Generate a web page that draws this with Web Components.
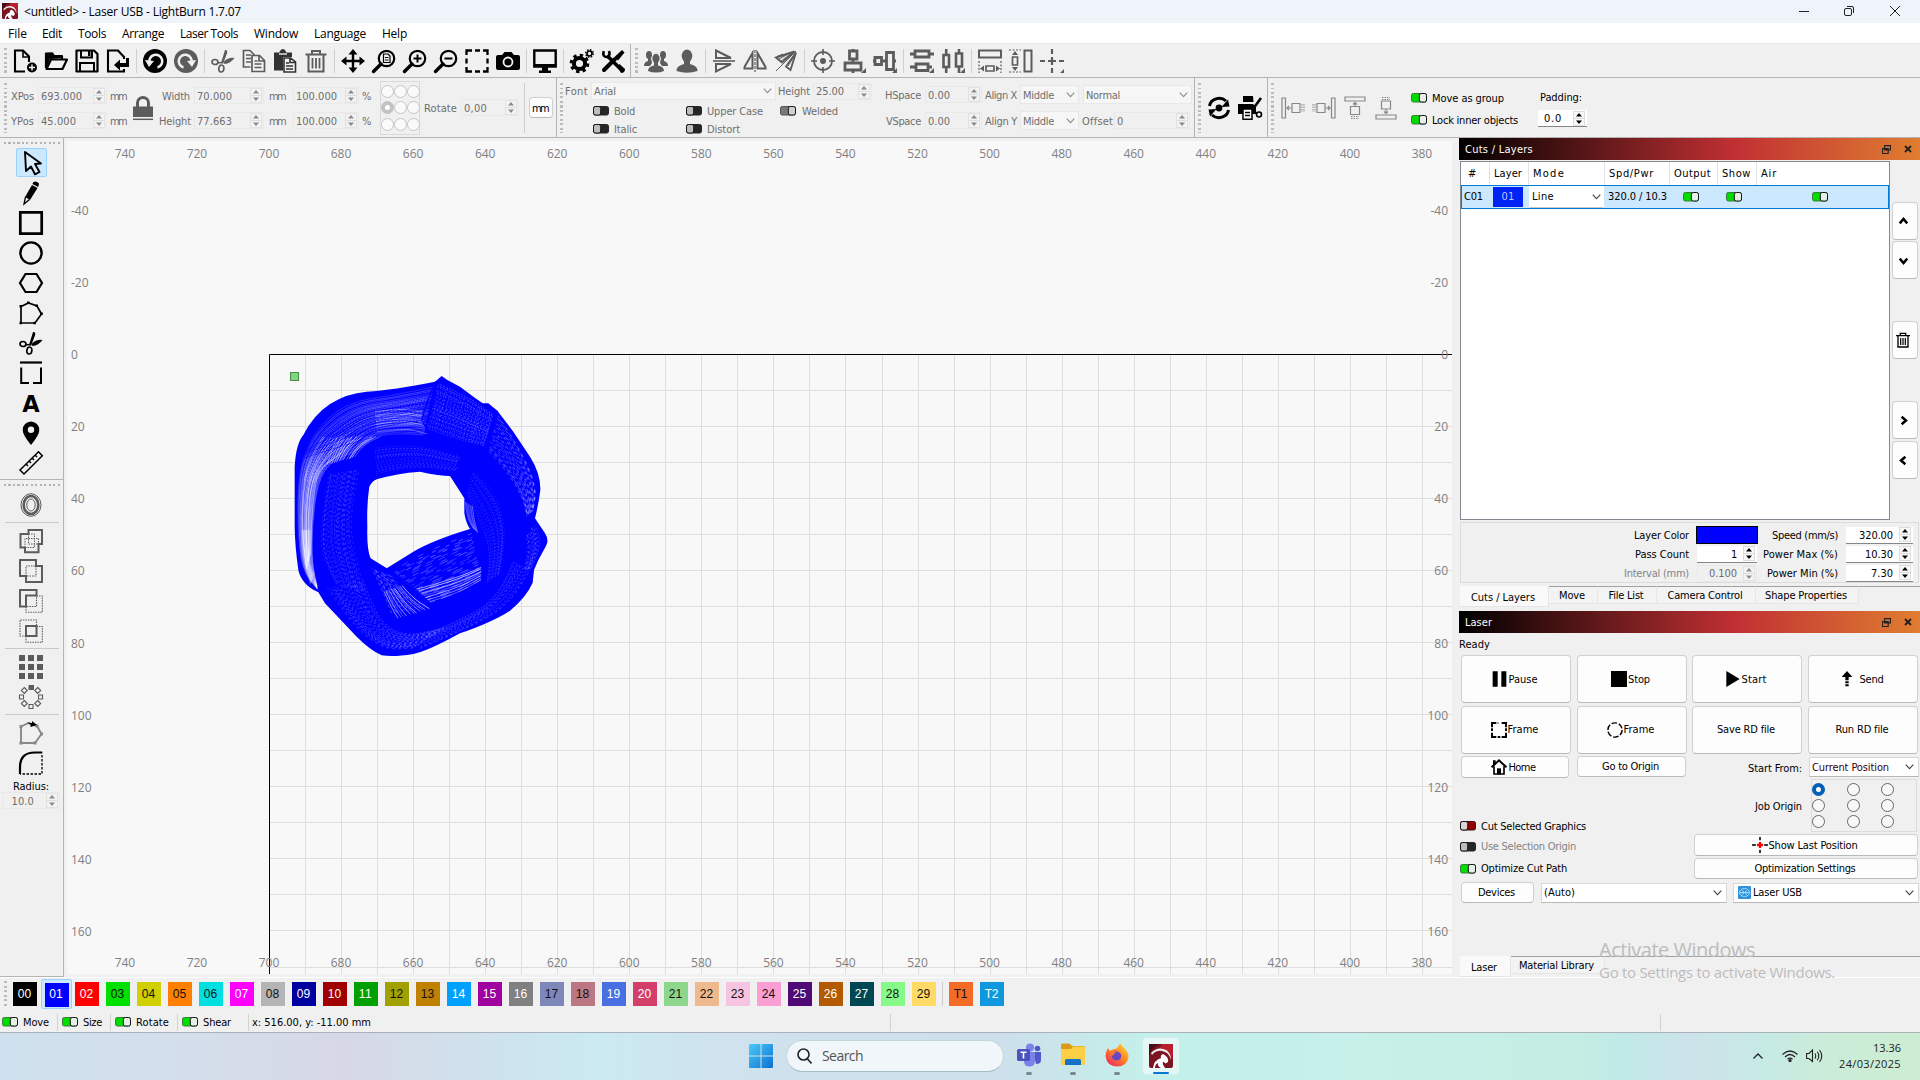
<!DOCTYPE html>
<html lang="en">
<head>
<meta charset="utf-8">
<title>LightBurn</title>
<style>
html,body{margin:0;height:100%;overflow:hidden;background:#f0f0f0}
body{font:11px "DejaVu Sans Condensed","DejaVu Sans",sans-serif;color:#000}
</style>
</head>
<body>
<lb-app></lb-app>
<script>
/* ---------- layout helpers: consecutive flex items described by start and size ---------- */
const H = (x0, items, st = '') => {
  let p = x0, s = `<div style="display:flex;align-items:center;height:100%;${st}">`;
  for (const [x, w, h, e] of items) { s += `<div style="flex:none;display:flex;align-items:center;margin-left:${x - p}px;width:${w}px;${e || ''}">${h}</div>`; p = x + w; }
  return s + '</div>';
};
const V = (y0, items, st = '') => {
  let p = y0, s = `<div style="display:flex;flex-direction:column;height:100%;width:100%;align-self:flex-start;${st}">`;
  for (const [y, h, c, e] of items) { s += `<div style="flex:none;margin-top:${y - p}px;height:${h}px;${e || ''}">${c}</div>`; p = y + h; }
  return s + '</div>';
};
const T = (t, w, c) => `<lb-text ${w ? `w="${w}"` : ''} ${c ? `style="color:${c}"` : ''}>${t}</lb-text>`;
const G = '#6e6e6e';
const I = (n, s = 24, c) => `<lb-icon name="${n}" size="${s}" ${c ? `style="color:${c}"` : ''}></lb-icon>`;
const TG = k => `<lb-toggle kind="${k}"></lb-toggle>`;
const define = (name, css, render, after) => customElements.define(name, class extends HTMLElement {
  connectedCallback() {
    if (this.shadowRoot) return;
    const r = this.attachShadow({ mode: 'open' });
    r.innerHTML = `<style>${css}</style>` + render(this);
    if (after) after(this, r);
  }
});
const A = (e, n, d = '') => e.getAttribute(n) ?? d;

/* ---------- icons, 24x24 ---------- */
const S = (d, w = 2, x = '') => `<path d="${d}" fill="none" stroke="currentColor" stroke-width="${w}" ${x}/>`;
const F = (d, x = '') => `<path d="${d}" fill="currentColor" ${x}/>`;
const scis = F('M14 1q4-1 1 6l-3 8-2-1z') + F('M23.500 9q-6-1-11 4l1 2q6-.5 10-6z') + S('M4 10.500c4 0 4 5 0 5s-4-5 0-5zM10.500 16c3.500 0 3 7-.5 7s-2.500-7 .5-7zM6 14l5-.5', 1.7);
const mag = S('M14.500 1.800a7.700 7.700 0 1 1 0 15.400a7.700 7.700 0 1 1 0-15.400', 2.2) + S('M9 15L1.500 22.500', 3.4, 'stroke-linecap="round"');
const ICONS = {
  newf: S('M12 22.500H2V1.500H10L16 7.500V13', 2.1) + S('M10 1.500V8H16', 1.6) + '<circle cx="19" cy="18.500" r="5" fill="currentColor"/><path d="M19 15.500v6M16 18.500h6" stroke="#f0f0f0" stroke-width="1.500"/>',
  open: S('M2 19V4.500H8L10 7H18V10', 2.2, 'stroke-linejoin="round"') + S('M2.500 20L7 10.500H23L18.500 20Z', 2.2, 'stroke-linejoin="round"') + F('M1 4L9 3.500L10 7H19V9L6 10L2 20Z'),
  save: S('M1.500 1.500H19L22.500 5V22.500H1.500Z', 2.2, 'stroke-linejoin="round"') + S('M6 1.500V8.500H17V1.500M5 22V14H19V22', 2) + F('M13 2h2.500v5H13z'),
  exp: S('M18 10V8L12 1.500H2V22.500H18V20', 2.1) + F('M8 16L14 10.500V14H20V9H23V18H14V21.500Z'),
  undo: '<circle cx="12" cy="12" r="12" fill="currentColor"/><path d="M6.500 14A6.500 6.500 0 1 1 14.500 18.500" fill="none" stroke="#f0f0f0" stroke-width="2.600"/><path d="M2 11L11 12L6 18Z" fill="#f0f0f0"/>',
  redo: '<circle cx="12" cy="12" r="12" fill="currentColor"/><path d="M17.500 14A6.500 6.500 0 1 0 9.500 18.500" fill="none" stroke="#f0f0f0" stroke-width="2.600"/><path d="M22 11L13 12L18 18Z" fill="#f0f0f0"/>',
  cut: scis,
  copy: S('M8.500 18H1.500V1.500H8L12.500 6M4 6h5M4 9.500h5M4 13h5', 1.7) + S('M10 6.500H17.500L22.500 11.500V22.500H10ZM17 7V12H22M12.500 12h3M12.500 15h7M12.500 18.500h7', 1.7),
  paste: F('M1 3.500H6.500Q6.500 1 10 0Q13 1 13 3.500H19V8H10V21.500H1Z') + '<path d="M6 5h8" stroke="#f0f0f0" stroke-width="1.400"/>' + S('M11 9H17.500L22.500 13V23H11ZM17 9V13.500H22M13 14h3M13 17h7M13 20h7', 1.6),
  trash: S('M4.500 6V22.500H19.500V6M1.500 5.500H22.500M8 5V2H16V5', 2) + S('M8.500 9v10.500M12 9v10.500M15.500 9v10.500', 1.8),
  move: S('M12 3V21M3 12H21', 2.4) + F('M12 0l4.500 5.500h-9zM12 24l4.500-5.500h-9zM0 12l5.500-4.500v9zM24 12l-5.500-4.500v9z'),
  zfit: mag + S('M11.500 5H16L18 7V13.500H11.500ZM13 8.500h3.500M13 11h3.500', 1.2),
  zin: mag + S('M14.500 5.500v8M10.500 9.500h8', 2), zout: mag + S('M10.500 9.500h8', 2),
  marq: S('M1.500 6V1.500H7M10 1.500H15M18 1.500H22.500V6M22.500 9.500V14.500M22.500 18V22.500H18M15 22.500H10M7 22.500H1.500V18M1.500 14.500V9.500', 2.3),
  cam: F('M2 6H6L8.500 3H15.500L18 6H22Q24 6 24 8V19Q24 21 22 21H2Q0 21 0 19V8Q0 6 2 6Z') + '<circle cx="12" cy="13" r="4.500" fill="none" stroke="#f0f0f0" stroke-width="1.800"/>',
  mon: S('M1.300 1.500H22.700V17.500H1.300Z', 2.4) + F('M1 15H23V18H1zM9 18H15V21.500H18V24H6V21.500H9Z'),
  gear: '<circle cx="9.500" cy="14.500" r="5.600" fill="none" stroke="currentColor" stroke-width="4"/><circle cx="9.500" cy="14.500" r="8.300" fill="none" stroke="currentColor" stroke-width="3" stroke-dasharray="3.300 3.219"/><circle cx="19.500" cy="4.500" r="2.500" fill="none" stroke="currentColor" stroke-width="1.700"/><circle cx="19.500" cy="4.500" r="3.800" fill="none" stroke="currentColor" stroke-width="1.400" stroke-dasharray="1.500 1.484"/>',
  tools: S('M6 6.500L19.500 20', 3.6) + S('M3 21L14 10', 4, 'stroke-linecap="round"') + S('M2.800 2.200Q.8 8 6.500 8.200Q9.500 6 8 2', 2.600) + F('M13.500 8L21 1L23.500 3.500L17 11.500Z') + F('M16 17.500l2.500-2.500l5.500 5q0 4-4 4z'),
  group: '<ellipse cx="5" cy="6" rx="3" ry="4" fill="currentColor"/><ellipse cx="19" cy="6" rx="3" ry="4" fill="currentColor"/>' + F('M0 17Q0 13 4 12V9H7L8 14L6 17ZM24 17Q24 13 20 12V9H17L16 14L18 17Z') + '<ellipse cx="12" cy="9.500" rx="4" ry="5" fill="currentColor" stroke="#f0f0f0" stroke-width=".8"/>' + F('M4 22Q4 17.500 10 16.500V13H14V16.500Q20 17.500 20 22Q12 25 4 22Z'),
  person: '<ellipse cx="12" cy="7" rx="5.300" ry="6.500" fill="currentColor"/>' + F('M1.500 22Q1 17 9 15V12H15V15Q23 17 22.500 22Q12 25.500 1.500 22Z'),
  flipv: S('M4 1.500L19 9H4ZM4 22.500V15H19Z', 2) + S('M1 12H23', 1.6),
  fliph: S('M1.500 19.500V18L9.500 4V19.500ZM22.500 19.500V18L14.500 4V19.500Z', 2) + S('M12 1V23', 1.2, 'stroke-dasharray="3 1"'),
  diag: S('M2 8.500L20.500 2.500L8 13.500ZM22 3.500L16.500 21L12 17.500Z', 1.900) + S('M2 22L22 2M5 10L16 4M7 12L18 4M3 7.500L9 5M14 17L21 6', 1),
  target: '<circle cx="12" cy="12" r="9" fill="none" stroke="currentColor" stroke-width="1.800"/><circle cx="12" cy="12" r="3" fill="currentColor"/>' + S('M12 0V6M12 18V24M0 12H6M18 12H24', 1.6),
  alh: S('M7.500 2H15V10H7.500ZM3 14H19V21H3ZM11 10v4M11 0v3M11 21v3', 2.800) + F('M24 19v5h-5z'),
  alv: S('M2 8.500H8.500V15.500H2ZM13.500 3.500H20.500V20.500H13.500ZM8.500 12h5M0 12h2M20 12h3', 2.800) + F('M24 19v5h-5z'),
  dish: S('M5 2H19V8H5ZM6 15H18V21.500H6ZM0 5H5M19 5H24M0 18H6M18 18H22', 2.800) + F('M24 19v5h-5z'),
  disv: S('M2.500 6H8V18H2.500ZM15 4.500H21V17.500H15ZM5.200 0V6M5.200 18V24M18 0V5M18 17V24', 2.600) + F('M24 19v5h-5z'),
  rezh: S('M1 1.500H23V8.500H1Z', 2) + S('M1 12V24M23 12V24', 1.2, 'stroke-dasharray="2 1.500"') + S('M8 17H16V22H8Z', 1.7) + F('M2 19.500l4-3v6zM22 19.500l-4-3v6z'),
  rezv: S('M15.500 1.500H22.500V22.500H15.500Z', 2) + S('M0 1H12M0 23H12', 1.2, 'stroke-dasharray="2 1.500"') + S('M3.500 8H8.500V16H3.500Z', 1.7) + F('M6 2l3 4H3zM6 22l3-4H3z'),
  plus: S('M12 0V5M12 8V16M12 19V24M0 12H5M8 12H16M19 12H24', 2.2) + F('M24 20v4h-4z'),
  lock: S('M6.500 11V7a5.500 5.500 0 0 1 11 0V11', 3) + F('M2 10.500H22V21H2Z') + S('M2 23.300H22', 1.5),
  sync: S('M2.500 10A9.700 8.800 0 0 1 19 5M21.500 14A9.700 8.800 0 0 1 5 19', 3) + F('M22.500 10.500l-8 .5L21 3.500zM1.500 13.500l8-.5L3 20.500z') + '<circle cx="12" cy="12" r="3.400" fill="currentColor"/>',
  print: F('M5 0H15L15.500 6H5ZM0 8H15L18 11V18H0Z') + S('M15 13L23 2', 2.600) + S('M14 12L19 18', 1.800) + '<circle cx="21" cy="18.500" r="2.500" fill="#f0f0f0" stroke="currentColor" stroke-width="1.600"/><path d="M5 13H14V23.200H5Z" fill="#fff" stroke="currentColor" stroke-width="1.500"/>' + S('M7 16.500h5M7 19.500h5', 1.300),
  dl: S('M1 2H4.500V22H1ZM11 7.500H19V16.500H11ZM11 12H6M8 10L6 12L8 14', 1.200) + S('M21 8v8M23 8v8', 1, 'stroke-dasharray="1.500 1"'),
  dr: S('M19.500 2H23V22H19.500ZM5 7.500H13V16.500H5ZM13 12H18M16 10L18 12L16 14', 1.200) + S('M3 8v8M1 8v8', 1, 'stroke-dasharray="1.500 1"'),
  du: S('M2 1H22V5H2ZM7.500 10.500H16.500V18.500H7.500ZM12 10V6M10 8.500L12 6.500L14 8.500', 1.200) + S('M8 20.500h8M8 22.500h8', 1, 'stroke-dasharray="1.500 1"'),
  dd: S('M2 19H22V23H2ZM7.500 5H16.500V13H7.500ZM12 13V18M10 15.500L12 17.500L14 15.500', 1.200) + S('M8 3.500h8M8 1.500h8', 1, 'stroke-dasharray="1.500 1"'),
  cursor: '<path d="M5 1L21 12.500L15 13L19.500 21L15 23.300L11 15.500L6 20Z" fill="#fff" fill-opacity=".3" stroke="#000" stroke-width="1.900" stroke-linejoin="round"/>',
  pencil: F('M14 1.500Q17-1 20 2.500Q20 4 19 6L13.500 3Z') + F('M13 4L18.500 7L11 19L6 16Z') + S('M6.500 16L5 23L10.500 18.500', 1.300),
  sq: S('M1.300 1.300H22.700V22.700H1.300Z', 2.7),
  circ: '<circle cx="12" cy="12" r="10.600" fill="none" stroke="currentColor" stroke-width="2.400"/>',
  hex: S('M6.500 3H17.500L23 12L17.500 21H6.500L1 12Z', 2.200),
  poly: S('M2 5.500L9.500 2L18 5L22.500 13L16 22H2Z', 1.700) + F('M.5 4h2.500v2.500h-2.500zM8 .5h2.500v2.500H8zM16.500 3.500h2.500v2.500h-2.500zM21.300 11.500h2.500v2.500h-2.500zM14.500 20.800h2.500v2.500h-2.500zM.5 20.800h2.500v2.500h-2.500z'),
  frame: S('M1 1.500H23', 2.200) + S('M2.200 6.500V22H10M14 22H22V6.500', 2),
  text: '<text x="12" y="20.500" text-anchor="middle" font-family="DejaVu Sans" font-weight="700" font-size="22.500" fill="currentColor">A</text>',
  pin: F('M12 0.500A8.300 8.300 0 0 1 20.300 9Q20.300 14 12 24Q3.700 14 3.700 9A8.300 8.300 0 0 1 12 .5ZM12 5.500a3.200 3.200 0 1 0 0 6.400a3.200 3.200 0 1 0 0-6.400Z', 'fill-rule="evenodd"'),
  ruler: S('M1 19L19.500 .8L23.300 4.800L5 23ZM7 13l2 2M10 10l2 2M13 7l2 2M16 4l2 2', 1.500),
  off: '<ellipse cx="12" cy="12" rx="10" ry="11.300" fill="none" stroke="currentColor" stroke-width="1"/><ellipse cx="12" cy="12" rx="7.300" ry="9" fill="none" stroke="currentColor" stroke-width="2.600"/><ellipse cx="12" cy="12" rx="4.200" ry="6" fill="none" stroke="currentColor" stroke-width="1"/>',
  weld: S('M9.500 5V1H23V15H19.500V23.300H6V18.500H1.500V5Z', 2) + S('M9.500 5V15H19.500M6 18.500V9.500H19.500V15M9.500 5H15.500V18.500H6', 1, 'stroke-dasharray="1.500 1"'),
  uni: S('M1 1H17V7H23V23H7V17H1Z', 2) + S('M7 17V7H17V17Z', 1.100, 'stroke-dasharray="1.500 1"'),
  sub: S('M1 1H17.500V6.500H7V17.500H1Z', 2) + S('M17.500 7H23.300V23.300H7V17.500H17.500Z', 1.100, 'stroke-dasharray="1.500 1"'),
  inter: S('M7 7H17.500V17H7Z', 2) + S('M7 17H1V1H17.500V7M17.500 7.500H23.300V23.300H7V17', 1.100, 'stroke-dasharray="1.500 1"'),
  grid: F('M0 0h6v6H0zM9 0h6v6H9zM18 0h6v6h-6zM0 9h6v6H0zM9 9h6v6H9zM18 9h6v6h-6zM0 18h6v6H0zM9 18h6v6H9zM18 18h6v6h-6z'),
  rad: F('M9.500 0h5.500v5H9.500z') + S('M10 19.500h4v4h-4zM.5 10h4v4h-4zM19.500 10h4v4h-4zM5.300 2.500l3 3l-3 3l-3-3zM18.700 2.500l3 3l-3 3l-3-3zM5.300 15.500l3 3l-3 3l-3-3zM18.700 15.500l3 3l-3 3l-3-3z', 1.100),
  start: S('M2 5.500L9.500 2L18 5L22.500 13L16 22H2Z', 1.900) + F('M.5 4h3v3h-3zM16.500 3.500h3v3h-3zM21 11.500h3v3h-3zM14.500 20.500h3v3h-3zM.5 20.500h3v3h-3z') + '<path d="M8 1.500L13 2V0L18 4L11.500 6V3.500Z" fill="#000"/>',
  fillet: S('M1 23V16Q1 1.500 16 1.500H23.300', 2.200) + S('M23 4V23H1', 1.300, 'stroke-dasharray="2.500 1.500"'),
  up: S('M6 15l6-7l6 7', 4), down: S('M6 9l6 7l6-7', 4), right: S('M9 6l7 6l-7 6', 4), left: S('M15 6l-7 6l7 6', 4),
  pause: F('M1 0.500h7.500v23H1zM14 .5h7.500v23H14z'), stop: F('M0 0h24v24H0z'), play: F('M2 0L22 12L2 24Z'),
  send: F('M12 0L20 9H14.500V14H9.500V9H4ZM9.500 15.500h5v3h-5zM9.500 20h5v3h-5z'),
  fr: S('M1.500 8V1.500H8M16 1.500H22.500V8M22.500 16V22.500H16M8 22.500H1.500V16M1.500 9.500v4M22.500 9.500v4M10 1.500h1M10 22.500h4', 2.900),
  fc: '<circle cx="12" cy="12" r="10.700" fill="none" stroke="currentColor" stroke-width="2.200" stroke-dasharray="8.400 2.800"/>',
  home: S('M.8 12.500L12 2L23.200 12.500', 3) + F('M3 2h4v5L3 10z') + S('M4.500 11V22.500H19.500V11', 2.500) + F('M9 23v-9h6v9z'),
  last: S('M12 0V5M12 19V24M0 12H6M18 12H24', 2.300) + '<path d="M12 7.500v9M7.500 12h9" stroke="#f00" stroke-width="3.400"/>',
  rest: S('M7 1.500H22.500V13H7ZM1.500 9.500H16.500V22.500H1.500Z', 3), x: S('M3 3L21 21M21 3L3 21', 5.500),
  logo: '<rect width="24" height="24" rx="2" fill="#7d1422"/><path d="M13 0h11v18q-2-12-14-13z" fill="#b8202e"/><path d="M0 0h11Q3 3 0 12z" fill="#4a0d16"/><path d="M2 9Q9 1.500 18 6.500Q22 10 22 16Q20 8 13 7Q7 6 3 11Z" fill="#eee"/><path d="M4 24Q5 16 12 14Q11 11 14 10Q20 13 19 18L16.500 19.500L14 17.500Q13 20 16 24H12Q8 22 9 19Q6 20 6 24Z" fill="#fff"/>'
};
define('lb-icon', ':host{display:inline-flex;flex:none}svg{display:block;overflow:visible}', e => { const s = A(e, 'size', 24); return `<svg width="${s}" height="${s}" viewBox="0 0 24 24">${ICONS[A(e, 'name')]}</svg>`; });

/* text run fitted to a nominal advance width */
const mctx = document.createElement('canvas').getContext('2d');
define('lb-text', ':host{display:inline-block;white-space:nowrap;line-height:1.250;padding-top:var(--ty,2px)}', () => '<slot></slot>', e => {
  const w = +A(e, 'w', 0); if (!w) return;
  mctx.font = getComputedStyle(e).font;
  const n = e.textContent.length;
  e.style.letterSpacing = ((w - mctx.measureText(e.textContent).width) / n).toFixed(3) + 'px';
});

define('lb-toggle', ':host{display:inline-flex;flex:none;width:16px;height:10px}svg{display:block}', e => {
  const k = A(e, 'kind'), on = k == 'on' || k == 'welded';
  const bg = { on: '#00de00', off: '#262626', red: '#930000', welded: '#7a7a7a' }[k], kn = { on: '#e6f0e6', off: '#bdbdbd', red: '#dcd5d5', welded: '#cfcfcf' }[k];
  const bs = { on: '#3f7a3f', off: '#262626', red: '#3a1010', welded: '#555' }[k];
  return `<svg width="16" height="10"><rect x=".5" y=".5" width="15" height="8.500" rx="1.800" fill="${bg}" stroke="${bs}"/><rect x="${on ? 8.3 : .5}" y=".5" width="7.200" height="8.500" rx="2" fill="${kn}" stroke="#151515"/></svg>`;
});

define('lb-spin', `:host{display:flex;flex:none;box-sizing:border-box;width:100%;height:17px;align-items:center;background:#fff;border-bottom:1px solid #868686}
 :host([off]){background:transparent;border:1px solid #e9e9e9;color:#6e6e6e}
 .v{flex:1;padding-left:2px;white-space:nowrap}:host([r]) .v{text-align:right;padding:0 6px 0 0}
 .b{flex:none;width:12px;height:15px;border:1px solid #ddd;box-sizing:border-box;background:#f8f8f8;margin-right:2px;display:flex;flex-direction:column}:host([off]) .b{border-color:#e2e2e2;background:#f2f2f2;margin-right:1px}svg{display:block}`,
  e => `<div class="v">${T(A(e, 'value'), A(e, 'w'))}</div><div class="b"><svg width="10" height="13" fill="${e.hasAttribute('off') ? '#8a8a8a' : '#000'}"><path d="M2 4.500h6L5 1zM2 8.500h6L5 12z"/><path d="M0 6.500h10" stroke="#ddd"/></svg></div>`);
const SP = (v, w, x = 'off') => `<lb-spin value="${v}" w="${w}" ${x}></lb-spin>`;

define('lb-combo', `:host{display:flex;flex:1;box-sizing:border-box;height:100%;align-items:center;background:#fff;border:1px solid #d8d8d8;border-bottom-color:#b8b8b8}
 :host([off]){background:#f6f6f6;border-color:#e8e8e8;color:#6e6e6e}:host([flat]){border-color:#fff #fff #c8c8c8}
 .t{flex:1;padding-left:2px;display:flex;align-items:center}svg{flex:none;margin-right:4px}:host([off]) svg{margin-right:3px}:host([flat]) svg{margin-right:2px}`,
  e => `<div class="t"><slot></slot></div><svg width="9" height="6"><path d="M.7 .7L4.500 4.700L8.300 .7" fill="none" stroke="${e.hasAttribute('off') ? '#8c8c8c' : '#444'}" stroke-width="1.100"/></svg>`);
const CB = (t, x = 'off') => `<lb-combo ${x} style="width:100%">${t}</lb-combo>`;

define('lb-button', `:host{display:flex;flex:1;box-sizing:border-box;height:100%;align-items:center;justify-content:center;background:#fdfdfd;border:1px solid #d0d0d0;border-bottom-color:#b9b9b9;border-radius:4px;padding-right:2px}:host([c]){padding-right:0}::slotted(lb-icon){margin-left:-1px;margin-right:1px}`, () => '<slot></slot>');
const B = (c) => `<lb-button>${c}</lb-button>`;

define('lb-grip', ':host{display:block;width:3px;height:100%;background:repeating-linear-gradient(#bbb 0 2px,transparent 2px 4.500px)}:host([h]){height:2px;width:57px;background:repeating-linear-gradient(90deg,#b4b4b4 0 2px,transparent 2px 4.500px)}', () => '');
define('lb-radio', ':host{display:block;flex:none;box-sizing:border-box;width:13px;height:13px;border:1px solid #666;border-radius:50%;background:#f8f8f8}:host([on]){border:4px solid #005fb8;background:#fff}:host([dim]){border-color:#c6c6c6;background:#fafafa}:host([dim][on]){border:4px solid #c2c2c2;background:#fff}', () => '');

/* ---------- title and menu ---------- */
define('lb-titlebar', `:host{--ty:0;display:block;height:23px;background:#eff3fa;font:12px "Open Sans","Noto Sans",sans-serif}`, () =>
  H(0, [[2, 16, I('logo', 16)], [24, 217, T('&lt;untitled&gt; - Laser USB - LightBurn 1.7.07', 217)],
  [1799, 10, '<svg width="10" height="10"><path d="M0 5.500h10" stroke="#222"/></svg>'],
  [1844, 10, '<svg width="10" height="10" fill="none" stroke="#222"><rect x=".5" y="2.500" width="7" height="7" rx="1.500"/><path d="M3 .5h5q1.500 0 1.500 1.500v5"/></svg>'],
  [1890, 10, '<svg width="10" height="10" stroke="#222"><path d="M0 0l10 10M10 0L0 10"/></svg>']], 'height:22px'));
define('lb-menubar', `:host{--ty:0;display:block;height:21px;background:#fff;font:12px "Open Sans","Noto Sans",sans-serif;border-bottom:1px solid #e8e8e8;box-sizing:border-box}`, () =>
  H(0, [['File', 8, 19], ['Edit', 42, 20], ['Tools', 78, 28], ['Arrange', 122, 42], ['Laser Tools', 180, 58], ['Window', 254, 44], ['Language', 314, 52], ['Help', 382, 25]].map(([t, x, w]) => [x, w, T(t, w)])));

/* ---------- toolbars ---------- */
const tb = (list, c0) => list.map(([n, x, c]) => n == '|' ? [x, 1, '<div style="width:1px;height:24px;background:#d0d0d0"></div>'] : [x - 12, 24, I(n, 24, c || c0)]);
const D = '#5c5c5c';
define('lb-maintools', `:host{display:flex;height:34px;box-sizing:border-box;border-bottom:1px solid #b4b4b4}.a{width:630px;border-right:1px solid #b4b4b4;box-sizing:content-box;flex:none}.b{flex:1}`, () =>
  `<div class="a">${H(0, [[4, 3, '<lb-grip style="height:26px"></lb-grip>'], ...tb([['newf', 25], ['open', 56], ['save', 87], ['exp', 118], ['|', 136], ['undo', 155], ['redo', 186, D], ['|', 204], ['cut', 223, D], ['copy', 254, D], ['paste', 285, '#333'], ['trash', 316, D], ['|', 334], ['move', 353], ['zfit', 384], ['zin', 415], ['zout', 446], ['marq', 477], ['cam', 508], ['|', 526], ['mon', 545], ['|', 563], ['gear', 582], ['tools', 613]])])}</div>
   <div class="b">${H(631, [[635, 3, '<lb-grip style="height:26px"></lb-grip>'], ...tb([['group', 656], ['person', 687], ['|', 705], ['flipv', 724], ['fliph', 755], ['diag', 786], ['|', 804], ['target', 823], ['alh', 854], ['alv', 885], ['|', 903], ['dish', 922], ['disv', 953], ['|', 971], ['rezh', 990], ['rezv', 1021], ['plus', 1052]], D)])}</div>`);

const rads = V(81, [0, 1, 2].map(r => [r * 16.5 + 84, 13, `<div style="display:flex">${[0, 1, 2].map(c => `<lb-radio dim ${r == 1 && c == 0 ? 'on' : ''}></lb-radio>`).join('')}</div>`]));
const sep = '<div style="width:1px;height:59px;background:#b4b4b4"></div>';
define('lb-proptools', `:host{display:block;height:60px;box-sizing:border-box;border-bottom:1px solid #b4b4b4}`, () => H(0, [
  [4, 3, '<lb-grip style="height:50px"></lb-grip>'],
  [11, 117, V(78, [
    [87, 17, H(11, [[11, 23, T('XPos', 23, G)], [38, 69, SP('693.000', 41)], [110, 17, T('mm', 16, G)]])],
    [112, 17, H(11, [[11, 23, T('YPos', 23, G)], [38, 69, SP('45.000', 35)], [110, 17, T('mm', 16, G)]])]]), 'height:59px'],
  [131, 24, I('lock', 24, D)],
  [159, 213, V(78, [
    [87, 17, H(159, [[162, 28, T('Width', 28, G)], [194, 70, SP('70.000', 35)], [269, 17, T('mm', 16, G)], [293, 66, SP('100.000', 41)], [362, 10, T('%', 10, G)]])],
    [112, 17, H(159, [[159, 32, T('Height', 32, G)], [194, 70, SP('77.663', 35)], [269, 17, T('mm', 16, G)], [293, 66, SP('100.000', 41)], [362, 10, T('%', 10, G)]])]]), 'height:59px'],
  [380, 40, rads, 'height:54px;border:1px solid #dadada;box-sizing:border-box'],
  [424, 34, T('Rotate', 33, G)], [461, 58, SP('0,00', 23)],
  [524, 1, '<div style="width:1px;height:50px;background:#ccc"></div>'],
  [529, 24, B(T('mm', 16)), 'height:21px'],
  [556, 1, sep], [560, 3, '<lb-grip style="height:50px"></lb-grip>'],
  [565, 311, V(78, [
    [82, 18, H(565, [[565, 23, T('Font', 23, G)], [591, 185, CB(T('Arial', 22)), 'height:18px'], [778, 32, T('Height', 32, G)], [813, 59, SP('25.00', 28)]])],
    [103, 16, H(565, [[593, 16, TG('off')], [614, 22, T('Bold', 21, G)], [686, 16, TG('off')], [707, 57, T('Upper Case', 56, G)], [780, 16, TG('welded')], [802, 37, T('Welded', 36, G)]])],
    [121, 16, H(565, [[593, 16, TG('off')], [614, 24, T('Italic', 23, G)], [686, 16, TG('off')], [707, 34, T('Distort', 33, G)]])]]), 'height:59px'],
  [885, 307, V(78, [
    [85, 19, H(885, [[885, 37, T('HSpace', 36, G)], [925, 57, SP('0.00', 22)], [985, 33, T('Align X', 32, G)], [1020, 59, CB(T('Middle', 31)), 'height:19px'], [1083, 109, CB(T('Normal', 34)), 'height:19px']])],
    [111, 19, H(885, [[886, 36, T('VSpace', 35, G)], [925, 57, SP('0.00', 22)], [985, 33, T('Align Y', 32, G)], [1020, 59, CB(T('Middle', 31)), 'height:19px'], [1082, 32, T('Offset', 31, G)], [1114, 76, SP('0', 6)]])]]), 'height:59px'],
  [1194, 1, sep], [1198, 3, '<lb-grip style="height:50px"></lb-grip>'],
  [1207, 24, I('sync')], [1238, 24, I('print')],
  [1267, 1, sep], [1271, 3, '<lb-grip style="height:50px"></lb-grip>'],
  [1281, 24, I('dl', 24, '#888')], [1312, 24, I('dr', 24, '#888')], [1343, 24, I('du', 24, '#888')], [1374, 24, I('dd', 24, '#888')],
  [1411, 110, V(78, [
    [90, 16, H(1411, [[1411, 16, TG('on')], [1432, 73, T('Move as group', 72)]])],
    [112, 16, H(1411, [[1411, 16, TG('on')], [1432, 87, T('Lock inner objects', 86)]])]]), 'height:59px'],
  [1538, 49, V(78, [[89, 16, H(1538, [[1540, 42, T('Padding:', 42)]])], [110, 17, SP('&nbsp;0.0', 22, 'v')]]), 'height:59px']
]));

/* ---------- left tools ---------- */
const ic = (n, y, c) => [y - 12, 24, I(n, 24, c), 'padding-left:19px'];
const hs = y => [y, 1, '', 'margin-left:5px;width:54px;background:#c9c9c9'];
define('lb-sidebar', `:host{display:block;flex:none;width:64px;box-sizing:border-box;border-right:1px solid #b4b4b4;border-bottom:1px solid #b4b4b4;height:839px}.sel{width:31px;height:29px;box-sizing:border-box;border:1px solid #99d1ff;border-radius:2px;background:#cce8ff;display:flex;align-items:center;justify-content:center;margin-left:16px}`, () =>
  V(138, [[142, 2, '<lb-grip h></lb-grip>', 'padding-left:4px'], [148, 29, `<div class="sel">${I('cursor')}</div>`],
  ic('pencil', 193), ic('sq', 223), ic('circ', 253), ic('hex', 283), ic('poly', 313), ic('cut', 343), ic('frame', 373), ic('text', 403), ic('pin', 433), ic('ruler', 463),
  [479, 1, '', 'background:#b4b4b4'], [484, 2, '<lb-grip h></lb-grip>', 'padding-left:4px'],
  ic('off', 505, D), hs(522), ic('weld', 541, D), ic('uni', 571, D), ic('sub', 601, D), ic('inter', 631, D), hs(648), ic('grid', 667, D), ic('rad', 697, D), hs(714), ic('start', 733, '#888'), ic('fillet', 763),
  [778, 14, T('Radius:', 36), 'padding-left:13px'], [792, 17, SP('&nbsp;&nbsp;10.0', 29), 'width:58px;margin-left:2px']]));

/* ---------- workspace ---------- */
const rnd = (s => () => (s = (s * 16807) % 2147483647) / 2147483647)(4242);
const smooth = p => {
  let d = `M${p[0][0].toFixed(1)} ${p[0][1].toFixed(1)}`;
  for (let i = 1; i < p.length - 1; i++) d += `Q${p[i][0].toFixed(1)} ${p[i][1].toFixed(1)} ${((p[i][0] + p[i + 1][0]) / 2).toFixed(1)} ${((p[i][1] + p[i + 1][1]) / 2).toFixed(1)}`;
  const l = p[p.length - 1]; return d + `L${l[0].toFixed(1)} ${l[1].toFixed(1)}`;
};
/* n strokes blended from curve a to curve b; dash gives the grainy overlap of dense passes */
const band = (a, b, n, col, w, o, j = 2, dash = 0) => {
  let s = '';
  for (let i = 0; i < n; i++) {
    const t = (i + rnd() * .6) / n, dx = (rnd() - .5) * j;
    s += `<path d="${smooth(a.map((p, k) => [p[0] + (b[k][0] - p[0]) * t + dx, p[1] + (b[k][1] - p[1]) * t + dx]))}" fill="none" stroke="${col}" stroke-width="${w}" opacity="${(o * (.4 + .6 * rnd())).toFixed(2)}" ${dash ? `stroke-dasharray="${(dash * (.6 + rnd())).toFixed(1)} ${(dash * (.8 + rnd())).toFixed(1)}" stroke-dashoffset="${(rnd() * 20).toFixed(1)}"` : ''}/>`;
  }
  return s;
};
const blue = (d, w) => `<path d="${d}" fill="none" stroke="#00f" stroke-width="${w}" stroke-opacity=".85"/>`;
const art = () => {
  const sil = 'M545 108L562 120L600 140L640 170L668 190L685 190L712 212L760 275L810 350Q842 400 841 450Q836 490 825 535L855 580Q868 600 858 618L835 660L822 690L818 728Q800 770 750 812Q700 845 600 880Q500 935 460 942Q400 952 365 946Q330 930 290 890L195 790L175 757Q125 735 115 690Q105 620 104 560L104 380Q108 310 130 285Q160 225 210 192Q260 160 320 155Q400 150 525 125Z';
  const hole = 'M328 440Q335 425 350 418Q410 400 480 395Q540 408 570 408L613 475L613 520Q618 550 630 567Q520 600 460 635L380 685L332 655Q320 630 322 560Q320 490 328 440Z';
  let s = `<path d="${sil}${hole}" fill="#00f" fill-rule="evenodd"/>`;
  const W = '#fff';
  s += band([[520, 140], [400, 165], [300, 178], [220, 215], [150, 295], [114, 400], [112, 560], [125, 690], [172, 748]], [[490, 290], [430, 282], [340, 294], [300, 335], [215, 365], [175, 430], [158, 560], [158, 670], [170, 735]], 27, W, 1.4, .62);
  s += band([[500, 170], [380, 190], [280, 220], [180, 300], [130, 420]], [[490, 260], [420, 255], [320, 290], [230, 350], [165, 430]], 20, W, 1.8, .6, 2, 4);
  s += band([[185, 290], [140, 360], [125, 470], [125, 600], [140, 690]], [[300, 300], [240, 350], [180, 380], [160, 480], [152, 640]], 13, W, 1.9, .95);
  s += band([[230, 290], [215, 330], [200, 375]], [[370, 290], [320, 310], [290, 350]], 13, W, 2.1, .95);
  s += band([[122, 570], [122, 640], [150, 735]], [[155, 570], [152, 670], [164, 700]], 8, W, 2.2, .95);
  s += band([[345, 215], [420, 205], [485, 215]], [[350, 280], [430, 265], [500, 285]], 9, W, 1.9, .75);
  s += band([[125, 330], [240, 240], [420, 190], [520, 160]], [[130, 355], [280, 310], [390, 285], [500, 275]], 9, '#00f', 3, .75);
  s += band([[535, 130], [620, 165], [700, 225]], [[500, 270], [580, 300], [672, 320]], 24, W, 1.6, .62, 1, 4);
  s += band([[535, 130], [515, 200], [500, 260]], [[700, 222], [690, 270], [672, 320]], 24, W, 1.4, .55, 1, 4);
  s += blue('M528 124Q500 180 486 240L515 300M712 212Q695 260 668 332', 5);
  s += band([[715, 225], [780, 320], [832, 440], [820, 510]], [[682, 335], [735, 390], [785, 470], [800, 530]], 24, W, 1.5, .62, 2, 9);
  s += band([[640, 390], [700, 440], [740, 560], [720, 700]], [[620, 460], [665, 560], [690, 640], [680, 730]], 14, W, 1.3, .5, 2, 4);
  s += band([[205, 400], [185, 520], [180, 640], [225, 730]], [[300, 390], [270, 520], [285, 640], [320, 760]], 22, W, 1.4, .5, 2, 6);
  s += band([[345, 325], [450, 310], [600, 350]], [[350, 405], [450, 380], [590, 395]], 15, W, 1.4, .5, 2, 4);
  s += band([[200, 745], [265, 845], [365, 930], [460, 925]], [[315, 720], [350, 830], [430, 890], [560, 860]], 24, W, 1.5, .6, 2, 6);
  s += band([[480, 925], [620, 865], [740, 800], [810, 690]], [[500, 880], [650, 820], [720, 750], [760, 660]], 16, W, 1.4, .5, 2, 5);
  s += band([[615, 485], [618, 530], [640, 565]], [[640, 500], [645, 540], [655, 580]], 7, W, 1.600, .7);
  s += band([[825, 555], [852, 600], [812, 690]], [[795, 590], [800, 630], [790, 690]], 12, W, 1.5, .6, 2, 5);
  s += band([[395, 693], [480, 640], [635, 578]], [[510, 790], [590, 765], [664, 722]], 28, W, 1.6, .8, 2, 22);
  s += band([[470, 745], [580, 715], [664, 680]], [[512, 788], [590, 765], [664, 722]], 8, W, 2.300, 1);
  s += band([[335, 685], [370, 760], [395, 825]], [[400, 710], [430, 750], [500, 800]], 16, W, 1.5, .7, 2, 8);
  s += band([[370, 755], [390, 800], [410, 836]], [[430, 735], [460, 770], [515, 804]], 11, W, 2.100, .95);
  s += blue('M320 660Q420 700 460 745L525 802M385 687Q430 715 470 760', 5);
  return s;
};
define('lb-workspace', `:host{display:block;flex:none;margin:3px 0 0 3px;width:1385px;height:833px;background:#f8f8f8}svg{display:block}text{font:12px "Open Sans","Noto Sans",sans-serif;fill:#808080}`, () => {
  const X = n => 269.5 + n * 36.03, Y = n => 354.5 + n * 36.03;
  let g = '', t = '';
  for (let n = 1; X(n) < 1452; n++) g += `M${Math.floor(X(n)) + .5} 355V975`;
  for (let n = 1; Y(n) < 974; n++) g += `M270 ${Math.floor(Y(n)) + .5}H1456`;
  for (let v = 740, n = -4; v >= 380; v -= 20, n += 2) for (const y of [158, 967]) t += `<text x="${X(n) - .5}" y="${y}" text-anchor="middle" textLength="20.500">${v}</text>`;
  for (let v = -40; v <= 160; v += 20) { const y = Y(v / 10 * 1) + 4.800; t += `<text x="71" y="${y}">${v}</text><text x="1448" y="${y}" text-anchor="end">${v}</text>`; }
  return `<svg width="1385" height="833" viewBox="67 141 1385 833"><path d="${g}" stroke="#dedede"/><path d="M269.500 975V354.500H1456" fill="none" stroke="#000"/>
  <g transform="translate(260 340) scale(.33333)">${art()}</g><rect x="290.500" y="372.500" width="8" height="8" fill="#7bd87b" stroke="#4d8a4d"/>${t}</svg>`;
});

/* ---------- docks ---------- */
define('lb-dockbar', `:host{display:flex;align-items:center;height:100%;box-sizing:border-box;padding:0 8px 0 6px;color:#fff;background:linear-gradient(90deg,#000,#c13033 60%,#e07d31)}.g{flex:1}.i{color:#222;display:flex;gap:13px}`, e => `<slot></slot><span class="g"></span><span class="i">${I('rest', 9)}${I('x', 8)}</span>`);
define('lb-tab', `:host{display:flex;box-sizing:border-box;width:100%;height:18px;align-items:center;justify-content:center;align-self:flex-start;background:#f3f3f3;border-top:1px solid #a0a0a0;border-right:1px solid #e6e6e6;border-bottom:1px solid #e6e6e6;padding-right:2px}:host([on]){height:21px;background:#f9f9f9;border-top-color:#f9f9f9}`, () => '<slot></slot>');
const tab = (x, x2, t, w, on) => [x, x2 - x, `<lb-tab ${on ? 'on' : ''}>${T(t, w)}</lb-tab>`, 'align-self:flex-start'];
const rest = x => [x, 1920 - x, '', 'height:1px;background:#a0a0a0;align-self:flex-start'];

define('lb-layers', `:host{--ty:0;display:block;height:100%;box-sizing:border-box;border:1px solid #828790;background:#fff}.h{height:23px;display:flex}.r{height:24px;box-sizing:border-box;border:1px solid #0078d4;background:#cce8ff}.sw{width:30px;height:20px;background:#0023f5;color:#b9c8ff;display:flex;align-items:center;justify-content:center}lb-toggle{margin-bottom:1px}`, () => {
  const c = [1461, 1490, 1529, 1605, 1670, 1718, 1757, 1889], l = [['#', 8], ['Layer', 28], ['Mode', 32], ['Spd/Pwr', 45], ['Output', 37], ['Show', 29], ['Air', 16]];
  return `<div class="h">${H(1461, l.map(([t, w], i) => [c[i], c[i + 1] - c[i], T(t, w), `height:23px;box-sizing:border-box;border-right:${i < 6 ? 1 : 0}px solid #e2e2e2;padding-left:${i ? 4 : 7}px`]))}</div>
  <div class="r">${H(1462, [[1464, 20, T('C01', 19)], [1493, 30, `<div class="sw">${T('01', 13)}</div>`], [1529, 75, `<lb-combo flat>${T('Line', 22)}</lb-combo>`, 'height:22px'], [1608, 60, T('320.0 / 10.3', 59)], [1683, 16, TG('on')], [1726, 16, TG('on')], [1812, 16, TG('on')]])}</div>`;
});
const lab = (t, w, c) => `<div style="flex:1;text-align:right">${T(t, w, c)}</div>`;
define('lb-cutpanel', `:host{display:block;height:473px;margin-left:1px}.p{border:1px solid #dcdcdc;box-sizing:border-box;height:61px;width:459px}`, () => V(138, [
  [138, 22, `<lb-dockbar>${T('Cuts / Layers', 68)}</lb-dockbar>`, 'margin-left:-1px'],
  [161, 359, H(1460, [[1460, 430, '<lb-layers style="flex:1"></lb-layers>', 'height:359px'],
  [1892, 26, V(161, [['up', 202], ['down', 241], ['trash', 321], ['right', 401], ['left', 441]].map(([n, y]) => [y, 38, B(n == 'trash' ? I(n, 16) : I(n, 15))])), 'height:359px']])],
  [522, 61, `<div class="p">${V(523, [
    [526, 18, H(1461, [[1580, 109, lab('Layer Color', 55)], [1696, 62, '<div style="flex:1;height:16px;border:1px solid #000;background:#00f"></div>'], [1760, 78, lab('Speed (mm/s)', 66)], [1846, 67, SP('320.00', 34, 'r')]])],
    [545, 18, H(1461, [[1580, 109, lab('Pass Count', 54)], [1697, 60, SP('1', 6, 'r')], [1760, 78, lab('Power Max (%)', 75)], [1846, 67, SP('10.30', 28, 'r')]])],
    [564, 18, H(1461, [[1580, 109, lab('Interval (mm)', 65, '#838383')], [1697, 60, SP('0.100', 28, 'r off')], [1760, 78, lab('Power Min (%)', 71)], [1846, 67, SP('7.30', 22, 'r')]])]])}</div>`],
  [586, 21, H(1460, [tab(1460, 1549, 'Cuts / Layers', 64, 1), tab(1549, 1598, 'Move', 26), tab(1598, 1657, 'File List', 35), tab(1657, 1756, 'Camera Control', 75), tab(1756, 1859, 'Shape Properties', 82), rest(1859)])]]));

const jr = [0, 1, 2].map(r => [783 + r * 16, 13, H(1812, [1812, 1847, 1881].map((x, c) => [x, 13, `<lb-radio ${!r && !c ? 'on' : ''}></lb-radio>`]))]);
const four = (a) => H(1460, a.map((c, i) => [[1461, 1577, 1692, 1808][i], 110, B(c), 'height:48px']));
define('lb-laserpanel', `:host{--ty:1px;display:block;height:366px;margin-left:1px}`, () => V(611, [
  [611, 22, `<lb-dockbar style="--ty:2px">${T('Laser', 27)}</lb-dockbar>`, 'margin-left:-1px'],
  [637, 14, T('Ready', 31), 'margin-left:-1px'],
  [655, 48, four([I('pause', 16) + T('Pause', 29), I('stop', 16) + T('Stop', 22), I('play', 16) + T('Start', 25), I('send', 16) + '&nbsp;' + T('Send', 24)])],
  [705, 49, four([I('fr', 16) + T('Frame', 31), I('fc', 16) + T('Frame', 31), T('Save RD file', 58), T('Run RD file', 53)])],
  [756, 22, H(1460, [[1461, 108, B(I('home', 16) + T('Home', 27)), 'height:22px;--ty:2px'], [1577, 109, B(T('Go to Origin', 57)), 'height:21px;margin-top:-1px'], [1740, 62, lab('Start From:', 54), '--ty:3px'], [1809, 110, CB(T('Current Position', 77, '#350010'), 'n'), 'height:20px;--ty:2px']])],
  [779, 53, H(1460, [[1460, 150, V(779, [[819, 14, H(1460, [[1460, 16, TG('red')], [1481, 110, T('Cut Selected Graphics', 105)]])]]), 'height:53px'], [1740, 62, lab('Job Origin', 47), '--ty:3px'],
    [1811, 106, V(780, jr), 'height:53px;border:1px solid #dcdcdc;box-sizing:border-box']])],
  [834, 46, H(1460, [[1460, 150, V(834, [[839, 15, H(1460, [[1460, 16, TG('off')], [1481, 100, T('Use Selection Origin', 95, '#838383')]])], [861, 15, H(1460, [[1460, 16, TG('on')], [1481, 100, T('Optimize Cut Path', 86)]])]]), 'height:46px'],
    [1694, 224, V(834, [[834, 22, B(I('last', 16) + T('Show Last Position', 89)), '--ty:2px'], [858, 21, B(T('Optimization Settings', 101))]]), 'height:46px']])],
  [882, 21, H(1460, [[1461, 73, B(T('Devices', 37)), 'height:21px'], [1541, 186, CB(T('(Auto)', 31), 'n'), 'height:20px'], [1733, 186, CB('<svg width="13" height="13" style="margin:0 2px 0 2px"><rect width="13" height="13" rx="1" fill="#2f93dc"/><g fill="none" stroke="#a5d8fb"><ellipse cx="6.500" cy="6.500" rx="5" ry="4"/><path d="M2 6.500h9M4 4.500l5 4M9 4.500l-5 4"/></g></svg>' + T('Laser USB', 49), 'n'), 'height:20px']])],
  [956, 21, H(1460, [tab(1460, 1511, 'Laser', 26, 1), tab(1511, 1605, 'Material Library', 75), rest(1605)]), '--ty:2px']]));

/* ---------- palette, status ---------- */
define('lb-swatch', `:host{display:flex;width:24px;height:24px;align-items:center;justify-content:center;font:12px "Liberation Sans",Arial,sans-serif;padding-right:1px;box-sizing:border-box}`, () => '<slot></slot>');
const pal = [['#000', 1], ['#00f', 1], ['#f00', 1], ['#00e000'], ['#d0d000'], ['#ff8000'], ['#00e0e0'], ['#f0f', 1], ['#b4b4b4'], ['#0000a0', 1], ['#a00000', 1], ['#00a000', 1], ['#a0a000'], ['#c08000'], ['#00a0ff', 1], ['#a000a0', 1], ['#808080', 1], ['#7d87b9'], ['#bb7784'], ['#4a6fe3', 1], ['#d33f6a', 1], ['#8cd78c'], ['#f0b98d'], ['#f6c4e1'], ['#fa9ed4'], ['#500a78', 1], ['#b45a00', 1], ['#004754', 1], ['#86fa88'], ['#ffdb66']];
const sw = (t, [c, l]) => `<lb-swatch style="background:${c};color:${l ? '#fff' : '#111'}">${T(t, 13.5)}</lb-swatch>`;
define('lb-palette', `:host{--ty:0;display:block;height:35px;border-top:1px solid #fff;box-sizing:border-box}`, () => H(0, [[4, 3, '<lb-grip style="height:26px"></lb-grip>'],
  ...pal.map((p, i) => i == 1 ? [41, 31, sw('01', p), 'justify-content:center;padding-top:1px;height:30px;box-sizing:border-box;border:1px solid #99d1ff;background:#cce8ff;border-radius:2px'] : [13 + i * 31, 24, sw(String(i).padStart(2, '0'), p)]),
  [942, 1, '<div style="width:1px;height:24px;background:#ccc"></div>'], [949, 24, sw('T1', ['#f46b27'])], [980, 24, sw('T2', ['#0e98dd', 1])]], 'height:32px'));
const vs = x => [x, 1, '<div style="width:1px;height:17px;background:#d2d2d2"></div>'];
define('lb-status', `:host{display:block;height:21px;border-bottom:1px solid #a9b2b8;box-sizing:border-box}`, () => H(0, [[2, 16, TG('on')], [23, 27, T('Move', 26)], vs(57), [62, 16, TG('on')], [83, 20, T('Size', 19)], vs(110), [115, 16, TG('on')], [136, 34, T('Rotate', 33)], vs(177), [182, 16, TG('on')], [203, 29, T('Shear', 28)], vs(248), [252, 121, T('x: 516.00, y: -11.00 mm', 119)], vs(890), vs(1660)]));

/* ---------- taskbar ---------- */
const app = (svg) => `<div style="display:flex;flex-direction:column;align-items:center;width:38px;height:38px;padding-top:6px;box-sizing:border-box">${svg}<i style="margin-top:5px;width:6px;height:3px;border-radius:2px;background:#7a8a8c"></i></div>`;
define('lb-taskbar', `:host{--ty:0;display:block;height:47px;box-sizing:border-box;padding-bottom:1px;font:12px "Open Sans","Noto Sans",sans-serif;color:#222;background:linear-gradient(90deg,#cfe1ee 0,#d3dfec 8%,#d7d8e7 18%,#cde4ee 27%,#cbeaf1 31%,#cfe2ed 38%,#cddfeb 52%,#c3f0ea 60%,#c6f0e9 70%,#c5ede3 82%,#c0eae8 84.500%,#cde3ea 88%,#c6eae5 92%,#cbecd8 95%,#cdedd2 100%)}
 .s{flex:1;height:32px;box-sizing:border-box;border:1px solid #c3d4dd;border-bottom-color:#a9bcc6;border-radius:16px;background:#f0f6fa;display:flex;align-items:center;padding-left:10px;gap:10px;color:#555;font-size:14px}
 .lb{flex:1;height:38px;background:#e3f7f5;border:1px solid #d3eeeb;border-radius:4px;display:flex;flex-direction:column;align-items:center;padding-top:6px;box-sizing:border-box;gap:4px}.lb i{width:16px;height:3px;border-radius:2px;background:#0078d4}`, () => H(0, [
  [749, 24, '<svg width="24" height="24"><defs><linearGradient id="w" x2="1" y2="1"><stop stop-color="#4ccbf8"/><stop offset="1" stop-color="#0a6fd0"/></linearGradient></defs><path fill="url(#w)" d="M0 1q0-1 1-1h10.500v11.500H0zM12.500 0H23q1 0 1 1v10.500H12.500zM0 12.500h11.500V24H1q-1 0-1-1zM12.500 12.500H24V23q0 1-1 1H12.500z"/></svg>'],
  [786, 218, `<div class="s"><svg width="15" height="16" fill="none" stroke="#222" stroke-width="1.600"><circle cx="6.500" cy="6.500" r="5.500"/><path d="M10.500 11l4 4.500"/></svg>${T('Search', 41)}</div>`],
  [1010, 38, app('<svg width="24" height="24"><circle cx="13" cy="4.500" r="4" fill="#7b83eb"/><circle cx="20.500" cy="5.500" r="2.800" fill="#5059c9"/><path d="M16 9h8v8q0 4-5 4z" fill="#5059c9"/><path d="M7 9h11v9q0 5.500-5.500 5.500T7 18z" fill="#7b83eb"/><rect y="6" width="13" height="12" rx="1.500" fill="#4b53bc"/><path d="M3.500 9.200h6M6.500 9v6.500" stroke="#fff" stroke-width="1.600"/></svg>')],
  [1054, 38, app('<svg width="24" height="24"><path d="M0 2q0-1.500 1.500-1.500h7L11 3h11q2 0 2 2v6H0z" fill="#d99a16"/><path d="M0 6h10l2-2.500h10.500q1.500 0 1.500 1.500v15.500q0 1.500-1.500 1.500h-21Q0 22 0 20.500z" fill="#fccf45"/><path d="M4 22v-4.500q0-1.500 1.500-1.500h13q1.500 0 1.500 1.500V22z" fill="#1272c4"/></svg>')],
  [1098, 38, app('<svg width="24" height="24"><defs><linearGradient id="f" x1="1" x2=".2" y2="1"><stop stop-color="#ffe23f"/><stop offset=".5" stop-color="#ff8a20"/><stop offset="1" stop-color="#f0285e"/></linearGradient></defs><path d="M3 5l2 3q2-2 5-2q3-1 5-6q2 3 5 6q4 4 3.500 8.500Q22 23.500 12 23.500T.5 13Q.5 9 3 5z" fill="url(#f)"/><path d="M8 9q5-2 8 2q1 6-4 6.500Q6 17 7 12z" fill="#6c45c5"/><path d="M4 9q4-1 8 1q-4 0-4 3z" fill="#ff7f22"/></svg>')],
  [1142, 38, `<div class="lb">${I('logo', 24)}<i></i></div>`],
  [1753, 10, '<svg width="10" height="6"><path d="M.5 5.500L5 1l4.500 4.500" fill="none" stroke="#222" stroke-width="1.300"/></svg>'],
  [1782, 16, '<svg width="16" height="12" fill="none" stroke="#222" stroke-width="1.200"><path d="M.5 4.500Q8-2.500 15.500 4.500M3 7Q8 2 13 7M5.500 9.300Q8 7 10.500 9.300"/><circle cx="8" cy="10.700" r="1" fill="#222"/></svg>'],
  [1806, 17, '<svg width="17" height="14" fill="none" stroke="#222" stroke-width="1.100"><path d="M.6 4.500H3L6.500 1V12.500L3 9.500H.6ZM9 4.500q1.500 2.500 0 5M11.300 2.800q3 4.200 0 8.400M13.500 1q4.500 6 0 12"/></svg>'],
  [1838, 63, `<div style="flex:1;text-align:right;display:flex;flex-direction:column;align-items:flex-end;gap:2px;font-size:11px">${T('13.36', 28)}${T('24/03/2025', 62)}</div>`]]));

define('lb-app', `:host{display:flex;flex-direction:column;width:1920px;height:1080px;position:relative;background:#f0f0f0;overflow:hidden}
 .main{display:flex;height:839px;flex:none}.dock{width:461px;margin-left:7px;flex:none}
 .wm{position:absolute;left:1599px;top:937px;color:#bcbcbc;font-family:"Open Sans","Noto Sans",sans-serif;display:flex;flex-direction:column;--ty:0}
 .wm .a{font-size:20px;line-height:25px}.wm .b{font-size:15px;line-height:20px}`, () => `<lb-titlebar></lb-titlebar><lb-menubar></lb-menubar><lb-maintools></lb-maintools><lb-proptools></lb-proptools>
 <div class="main"><lb-sidebar></lb-sidebar><lb-workspace></lb-workspace><div class="dock"><lb-cutpanel></lb-cutpanel><lb-laserpanel></lb-laserpanel></div></div>
 <lb-palette></lb-palette><lb-status></lb-status><lb-taskbar></lb-taskbar>
 <div class="wm"><span class="a">${T('Activate Windows', 156)}</span><span class="b">${T('Go to Settings to activate Windows.', 236)}</span></div>`);
</script>
</body>
</html>
